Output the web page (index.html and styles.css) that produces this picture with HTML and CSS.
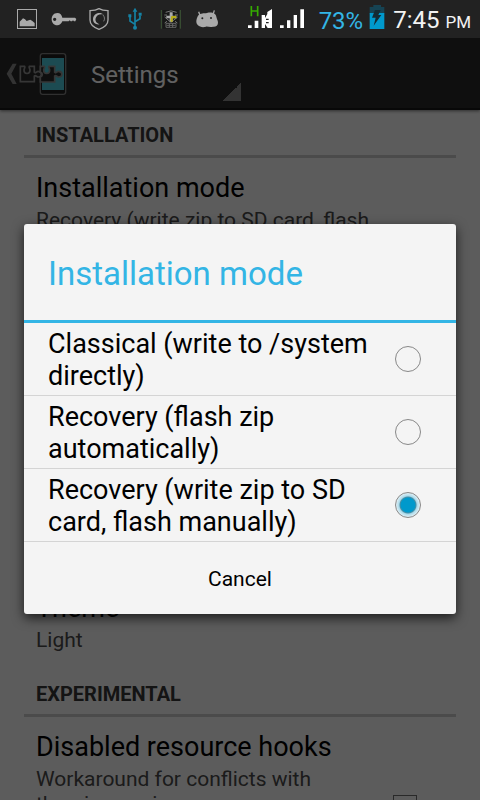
FILE: index.html
```html
<!DOCTYPE html>
<html lang="en">
<head>
    <meta charset="UTF-8">
    <meta name="viewport" content="width=device-width, initial-scale=1.0">
    <title>Settings</title>
    <link rel="stylesheet" href="styles.css">
</head>
<body>
    <!-- Status bar -->
    <div class="status-bar">
        <div class="notifications">
            <svg width="36" height="38" viewBox="0 0 108 114">
                <rect x="25.500" y="28.500" width="57" height="57" fill="none" stroke="#aaa" stroke-width="3"/>
                <path d="M32 79V65l6-6 4-4 6 3 5 5 6-2 5-2 6 4 7 6v10z" fill="#aaa"/>
            </svg>
            <svg width="36" height="38" viewBox="0 0 108 114">
                <path fill-rule="evenodd" d="M37 39c9 0 13 6 15 14h38l4 4-3 7h-4l-3-3-3 3h-4l-3-3-3 3H52c-2 7-8 12-15 12-11 0-17-8-17-18s6-19 17-19zM29 53a5 5 0 1 0 0 10 5 5 0 0 0 0-10z" fill="#aaa"/>
            </svg>
            <svg width="36" height="38" viewBox="0 0 108 114">
                <path d="M54 26c-8 5-18 6-27 6v28c0 14 13 23 27 28 14-5 27-14 27-28V32c-9 0-19-1-27-6z" fill="none" stroke="#aaa" stroke-width="4"/>
                <path d="M69 44c-14-11-33-3-33 14 0 10 8 17 20 15-11-4-14-11-12-18 2-10 14-15 25-11z" fill="#aaa"/>
                <path d="M66 45c5 6 6 12 2 19" fill="none" stroke="#aaa" stroke-width="2"/>
            </svg>
            <svg width="36" height="38" viewBox="0 0 108 114">
                <g fill="none" stroke="#1583a5" stroke-width="5">
                    <path d="M54 34v48M54 73L39 63V51M54 65l15-9V47"/>
                </g>
                <path d="M54 23l7 12H47zM34 43h9v9h-9zM65 38h9v9h-9z" fill="#1583a5"/>
                <circle cx="54" cy="83" r="6" fill="#1583a5"/>
            </svg>
            <svg width="36" height="38" viewBox="0 0 108 114">
                <path d="M25 30v56M82 30v56" stroke="#3d5636" stroke-width="3"/>
                <path d="M29 30h49v56H29z" fill="#171817"/>
                <path d="M38 37q16-9 33 0M34 45h8M66 45h9M35 51l19 16 20-16M42 64l-7 5M66 64l7 5" fill="none" stroke="#777" stroke-width="3"/>
                <path d="M50 37h9v10h11v8H59v10h-9V55H40v-8h10z" fill="#aaa"/>
                <path d="M55 48h15v7H59v10h-6v-8z" fill="#b8ae14"/>
                <path d="M39 70h30v12H39zM49 70v12M59 70v12M41 76h26" fill="none" stroke="#666" stroke-width="3"/>
            </svg>
            <svg width="36" height="38" viewBox="0 0 108 114">
                <path d="M34 49l-5-14M71 47l5-16" stroke="#aaa" stroke-width="4"/>
                <path d="M27 47c8-9 18-6 27-8 12-3 26-1 28 11 1 7 5 10 5 18 0 9-7 13-15 12-8 3-16-1-21 0-9 3-19 1-24-4-8-8-5-20 0-29z" fill="#aaa"/>
                <circle cx="40" cy="55" r="3" fill="#222"/>
                <circle cx="66" cy="54" r="3" fill="#222"/>
            </svg>
        </div>
        <svg class="signal" width="60" height="38" viewBox="0 0 180 114">
            <g fill="#fff">
                <path d="M3 76h11v8H3zM23 62h11v22H23zM44 45h10v39H44z"/>
                <path d="M54 54l7-12v-6l14-9v57H62l-8-12z"/>
                <path d="M99 76h11v8H99zM120 61h10v23h-10zM140 45h10v39h-10zM160 28h11v56h-11z"/>
            </g>
            <path d="M57 58h8M57 68h8" stroke="#222" stroke-width="4"/>
            <path d="M13 18v31M32 18v31M13 33h19" fill="none" stroke="#35ac00" stroke-width="5"/>
        </svg>
        <span class="battery-level">73%</span>
        <svg class="battery" width="16" height="38" viewBox="0 0 48 114">
            <path d="M13 15h23v6h10v20H2V21h11z" fill="#164353"/>
            <path d="M2 39h44v48H2z" fill="#0099cc"/>
            <path d="M18 30h17l-7 15h9L14 77l6-24H9z" fill="#142b34"/>
        </svg>
        <span class="clock">7:45 <small>PM</small></span>
    </div>

    <div class="screen">
        <!-- Action bar -->
        <header class="action-bar">
            <a class="home" href="#" aria-label="Back">
                <svg width="72" height="72" viewBox="0 0 216 216">
                    <path d="M38 77h12L34 107l16 31H38L20 107z" fill="#808080"/>
                    <rect x="121" y="47" width="76" height="122" rx="7" fill="#1c1c1c" stroke="#787878" stroke-width="4"/>
                    <path d="M126 60h66v96h-66z" fill="#46bccc"/>
                    <g fill="#262626" stroke="#888" stroke-width="5">
                        <path d="M61 85h13c3 3-2 7-2 11 0 14 18 14 18 0 0-4-5-8-2-11h15v18c4 5 7-4 12-3 12 1 12 17 0 17-5 0-8-7-12-3v17H61z"/>
                        <path d="M121 85h12c3 3-2 7-2 11 0 14 18 14 18 0 0-4-5-8-2-11h17v18c4 5 7-4 12-3 13 1 13 17 0 17-5 0-8-7-12-3v18h-43V117c8-4 8-12 0-15z"/>
                    </g>
                </svg>
            </a>
            <select class="page-select" aria-label="Page">
                <option>Settings</option>
            </select>
        </header>

        <!-- Preferences -->
        <main class="preferences">
            <section>
                <h2>Installation</h2>
                <div class="preference">
                    <div class="preference-text">
                        <h3>Installation mode</h3>
                        <p>Recovery (write zip to SD card, flash manually)</p>
                    </div>
                </div>
            </section>
            <section class="theme-section">
                <div class="preference">
                    <div class="preference-text">
                        <h3>Theme</h3>
                        <p>Light</p>
                    </div>
                </div>
            </section>
            <section>
                <h2>Experimental</h2>
                <div class="preference">
                    <label class="preference-text" for="resourceHooks">
                        <span class="title">Disabled resource hooks</span>
                        <span class="summary">Workaround for conflicts with theming engines</span>
                    </label>
                    <input type="checkbox" id="resourceHooks">
                </div>
            </section>
        </main>

        <!-- Installation mode dialog -->
        <div class="overlay">
            <form class="dialog" role="dialog" aria-labelledby="dialogTitle">
                <h1 id="dialogTitle">Installation mode</h1>
                <label class="choice">
                    <span>Classical (write to /system directly)</span>
                    <input type="radio" name="mode" value="classical">
                </label>
                <label class="choice">
                    <span>Recovery (flash zip automatically)</span>
                    <input type="radio" name="mode" value="recovery-auto">
                </label>
                <label class="choice">
                    <span>Recovery (write zip to SD card, flash manually)</span>
                    <input type="radio" name="mode" value="recovery-manual" checked>
                </label>
                <button type="button" class="cancel">Cancel</button>
            </form>
        </div>
    </div>
</body>
</html>
```
FILE: styles.css
```css
* {
    box-sizing: border-box;
}
body {
    margin: 0;
    height: 100vh;
    display: flex;
    flex-direction: column;
    overflow: hidden;
    font-family: Roboto, "Liberation Sans", sans-serif;
    background-color: #e6e6e6;
    color: #000;
}
h1, h2, h3, p {
    margin: 0;
    font-weight: 400;
}
svg {
    display: block;
    flex: none;
}

/* Status bar */
.status-bar {
    display: flex;
    align-items: center;
    flex: none;
    height: 38px;
    padding: 0 9px;
    background-color: #222;
    color: #f3f3f3;
    font-size: 24px;
    line-height: 34px;
    white-space: nowrap;
}
.notifications {
    display: flex;
    margin-right: auto;
}
.signal {
    margin-right: 12px;
}
.battery-level,
.clock {
    padding-top: 4px;
}
.battery-level {
    color: #33b5e5;
}
.battery {
    margin: 0 8px 0 6px;
}
.clock small {
    font-size: 17px;
}

/* Action bar */
.screen {
    position: relative;
    flex: 1;
    min-height: 0;
    overflow: hidden;
}
.action-bar {
    display: flex;
    height: 72px;
    background-color: #262626;
    border-bottom: 2px solid #161616;
    box-shadow: 0 1px 3px rgba(0, 0, 0, 0.5);
}
.page-select {
    width: 158px;
    margin: 8px 0 7px 11px;
    padding: 2px 8px 0;
    border: none;
    appearance: none;
    background: linear-gradient(135deg, transparent 50%, #808080 50%) right bottom / 18px 18px no-repeat;
    color: #f3f3f3;
    font-family: inherit;
    font-size: 24px;
}

/* Preferences */
.preferences {
    padding: 0 24px;
}
.preferences h2 {
    height: 48px;
    padding: 0 12px;
    border-bottom: 3px solid #bbb;
    color: #333;
    font-size: 20px;
    font-weight: 700;
    line-height: 50px;
    text-transform: uppercase;
}
.preference {
    display: flex;
    padding: 14px 12px 16px;
}
.preference-text {
    flex: 1;
}
.preference h3,
.title {
    display: block;
    font-size: 27px;
    line-height: 32px;
}
.preference p,
.summary {
    display: block;
    margin-top: 4px;
    color: #444;
    font-size: 21px;
    line-height: 25px;
}
.theme-section {
    margin-top: 304px;
}
.preference input {
    width: 24px;
    height: 24px;
    margin: 64px 27px 0 24px;
    appearance: none;
    border: 1px solid #666;
}

/* Dialog */
.overlay {
    position: absolute;
    inset: 0;
    display: flex;
    align-items: center;
    padding: 0 24px;
    background-color: rgba(0, 0, 0, 0.6);
}
.dialog {
    width: 100%;
    border-radius: 3px;
    background-color: #f4f4f4;
    box-shadow: 0 4px 12px rgba(0, 0, 0, 0.7);
}
.dialog h1 {
    padding: 4px 24px 0;
    border-bottom: 3px solid #33b5e5;
    color: #33b5e5;
    font-size: 33px;
    line-height: 92px;
}
.choice {
    display: flex;
    align-items: center;
    gap: 12px;
    padding: 5px 35px 3px 24px;
    border-bottom: 1px solid #d4d4d4;
    font-size: 27px;
    line-height: 32px;
}
.choice span {
    flex: 1;
}
.choice input {
    flex: none;
    width: 26px;
    height: 26px;
    margin: 0 0 2px;
    appearance: none;
    border: 1px solid #888;
    border-radius: 50%;
}
.choice input:checked {
    background: radial-gradient(circle, #0099cc 7px, #4a8fa5 8px, #a9d9ea 9px, #e2f0f5 12px);
}
.cancel {
    display: block;
    width: 100%;
    height: 72px;
    padding: 2px 0 0;
    border: none;
    background: none;
    color: #000;
    font-family: inherit;
    font-size: 21px;
}
```
